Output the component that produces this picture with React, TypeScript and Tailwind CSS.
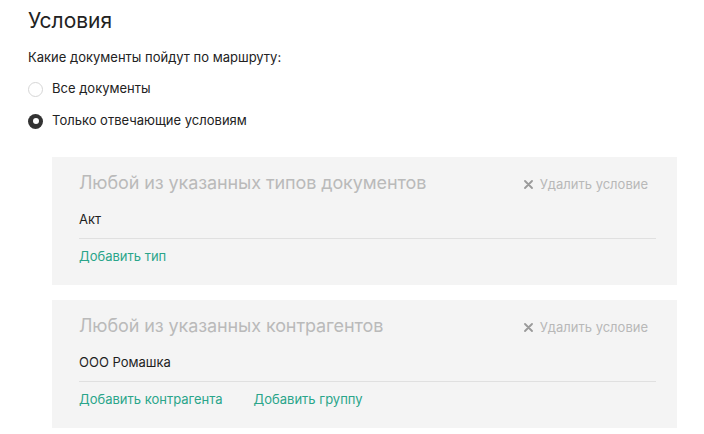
import React from "react";

function Radio({ checked, label }: { checked?: boolean; label: string }) {
  return (
    <div className="flex items-center h-[20px]">
      {checked ? (
        <span className="w-[15px] h-[15px] rounded-full bg-[#333333] flex items-center justify-center">
          <span className="w-[6px] h-[6px] rounded-full bg-white" />
        </span>
      ) : (
        <span className="w-[15px] h-[15px] rounded-full border border-[#d6d6d6] bg-white" />
      )}
      <span className="ml-[9px] text-[13px] text-[#222222]">{label}</span>
    </div>
  );
}

function Card({ title, item, links }: { title: string; item: string; links: string[] }) {
  return (
    <div className="bg-[#f4f4f4] pl-[27px] pr-[21px] pt-[13px] pb-[18px]">
      <div className="flex items-center justify-between h-[24px]">
        <span className="text-[18px] text-[#bababa] tracking-[-0.1px]">{title}</span>
        <span className="flex items-center mr-[8px] pt-[5px] text-[13px] text-[#b8b8b8]">
          <svg width="9" height="9" viewBox="0 0 9 9" className="mr-[7px]">
            <path d="M1 1 L8 8 M8 1 L1 8" stroke="#9a9a9a" strokeWidth="1.8" strokeLinecap="round" />
          </svg>
          Удалить условие
        </span>
      </div>
      <div className="mt-[16px] h-[20px] flex items-center text-[13px] text-[#1e1e1e]">{item}</div>
      <div className="mt-[8px] border-t border-[#e0e0e0]" />
      <div className="mt-[8px] h-[20px] flex items-center gap-[31px] text-[13px] text-[#2aa58a]">
        {links.map((l) => (
          <span key={l}>{l}</span>
        ))}
      </div>
    </div>
  );
}

export default function App() {
  return (
    <div className="w-[704px] h-[434px] bg-white overflow-hidden pl-[28px] pr-[27px]" style={{ fontFamily: "Inter, 'Noto Sans', sans-serif" }}>
      <div className="pt-[8px] h-[34px] flex items-center text-[21px] text-[#222222]">Условия</div>
      <div className="mt-[14px] h-[20px] flex items-center text-[13px] text-[#222222]">Какие документы пойдут по маршруту:</div>
      <div className="mt-[11px]">
        <Radio label="Все документы" />
      </div>
      <div className="mt-[12px]">
        <Radio checked label="Только отвечающие условиям" />
      </div>
      <div className="ml-[24px] mt-[26px] flex flex-col gap-[15px]">
        <Card title="Любой из указанных типов документов" item="Акт" links={["Добавить тип"]} />
        <Card title="Любой из указанных контрагентов" item="ООО Ромашка" links={["Добавить контрагента", "Добавить группу"]} />
      </div>
    </div>
  );
}
